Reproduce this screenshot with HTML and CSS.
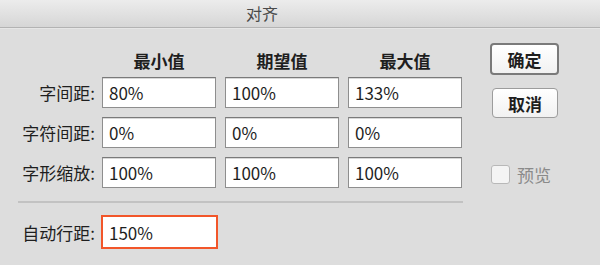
FILE: index.html
```html
<!DOCTYPE html>
<html lang="zh-CN">
<head>
    <meta charset="UTF-8">
    <title>对齐</title>
    <link rel="stylesheet" href="styles.css">
</head>
<body>
    <div class="titlebar">对齐</div>

    <div class="content">
        <div class="fields">
            <div class="row head">
                <span></span>
                <span>最小值</span>
                <span>期望值</span>
                <span>最大值</span>
            </div>
            <div class="row">
                <label>字间距:</label>
                <input type="text" value="80%">
                <input type="text" value="100%">
                <input type="text" value="133%">
            </div>
            <div class="row">
                <label>字符间距:</label>
                <input type="text" value="0%">
                <input type="text" value="0%">
                <input type="text" value="0%">
            </div>
            <div class="row">
                <label>字形缩放:</label>
                <input type="text" value="100%">
                <input type="text" value="100%">
                <input type="text" value="100%">
            </div>

            <hr class="separator">

            <div class="row auto">
                <label>自动行距:</label>
                <input type="text" class="focused" value="150%">
            </div>
        </div>

        <div class="side">
            <button class="btn default">确定</button>
            <button class="btn">取消</button>
            <label class="preview"><span class="checkbox"></span>预览</label>
        </div>
    </div>
</body>
</html>
```

FILE: styles.css
```css
body {
    margin: 0;
    width: 600px;
    height: 265px;
    overflow: hidden;
    background: #dddddd;
    font-family: "Noto Sans CJK SC", "Noto Sans", sans-serif;
    color: #1e1e1e;
    font-size: 17px;
}

.titlebar {
    height: 27px;
    line-height: 27px;
    padding-right: 76px;
    text-align: center;
    font-size: 16px;
    color: #4a4a4a;
    background: linear-gradient(to bottom, #ececec, #d6d6d6);
    border-bottom: 1px solid #b3b3b3;
    box-shadow: 0 1px 0 #e6e6e6;
}

.content {
    display: flex;
}

.fields {
    width: 470px;
    padding-top: 22px;
}

.row {
    display: grid;
    grid-template-columns: 93px 114px 114px 114px;
    column-gap: 9px;
    height: 31px;
    margin-top: 9px;
    align-items: center;
}

.row.head {
    height: 22px;
    margin-top: 0;
    margin-bottom: -4px;
    font-weight: bold;
    text-align: center;
    line-height: 22px;
}

.row label {
    text-align: right;
    margin-right: -2px;
    white-space: nowrap;
}

.row input {
    box-sizing: border-box;
    height: 31px;
    width: 114px;
    margin: 0;
    padding: 0 6px;
    border: 1px solid #8e8e8e;
    border-top-color: #7a7a7a;
    box-shadow: inset 0 1px 0 #d8d8d8;
    background: #fff;
    font-family: inherit;
    font-size: 17px;
    color: #1e1e1e;
    outline: none;
}

.separator {
    margin: 13px 0 0 18px;
    width: 445px;
    height: 0;
    border: none;
    border-top: 2px solid #c2c2c2;
}

.row.auto {
    height: 34px;
    margin-top: 12px;
}

.row input.focused {
    height: 34px;
    width: 117px;
    margin-left: -1px;
    border: 2px solid #f2562a;
    box-shadow: none;
}

.side {
    display: flex;
    flex-direction: column;
    align-items: flex-start;
    padding-left: 20px;
    padding-top: 15px;
}

.btn {
    box-sizing: border-box;
    width: 66px;
    height: 30px;
    margin-left: 2px;
    padding: 0;
    border: 1px solid #9c9c9c;
    border-radius: 4px;
    background: linear-gradient(to bottom, #ffffff, #f1f1f1);
    font-family: inherit;
    font-size: 17px;
    font-weight: bold;
    color: #1e1e1e;
}

.btn.default {
    width: 69px;
    height: 32px;
    margin-left: 0;
    border: 2px solid #7a7a7a;
    margin-bottom: 13px;
}

.preview {
    display: flex;
    align-items: center;
    margin-top: 44px;
    margin-left: 1px;
    color: #8a8a8a;
}

.checkbox {
    box-sizing: border-box;
    width: 19px;
    height: 19px;
    margin-right: 7px;
    border: 1px solid #b8b8b8;
    border-radius: 3px;
    background: #f4f4f4;
}
```
